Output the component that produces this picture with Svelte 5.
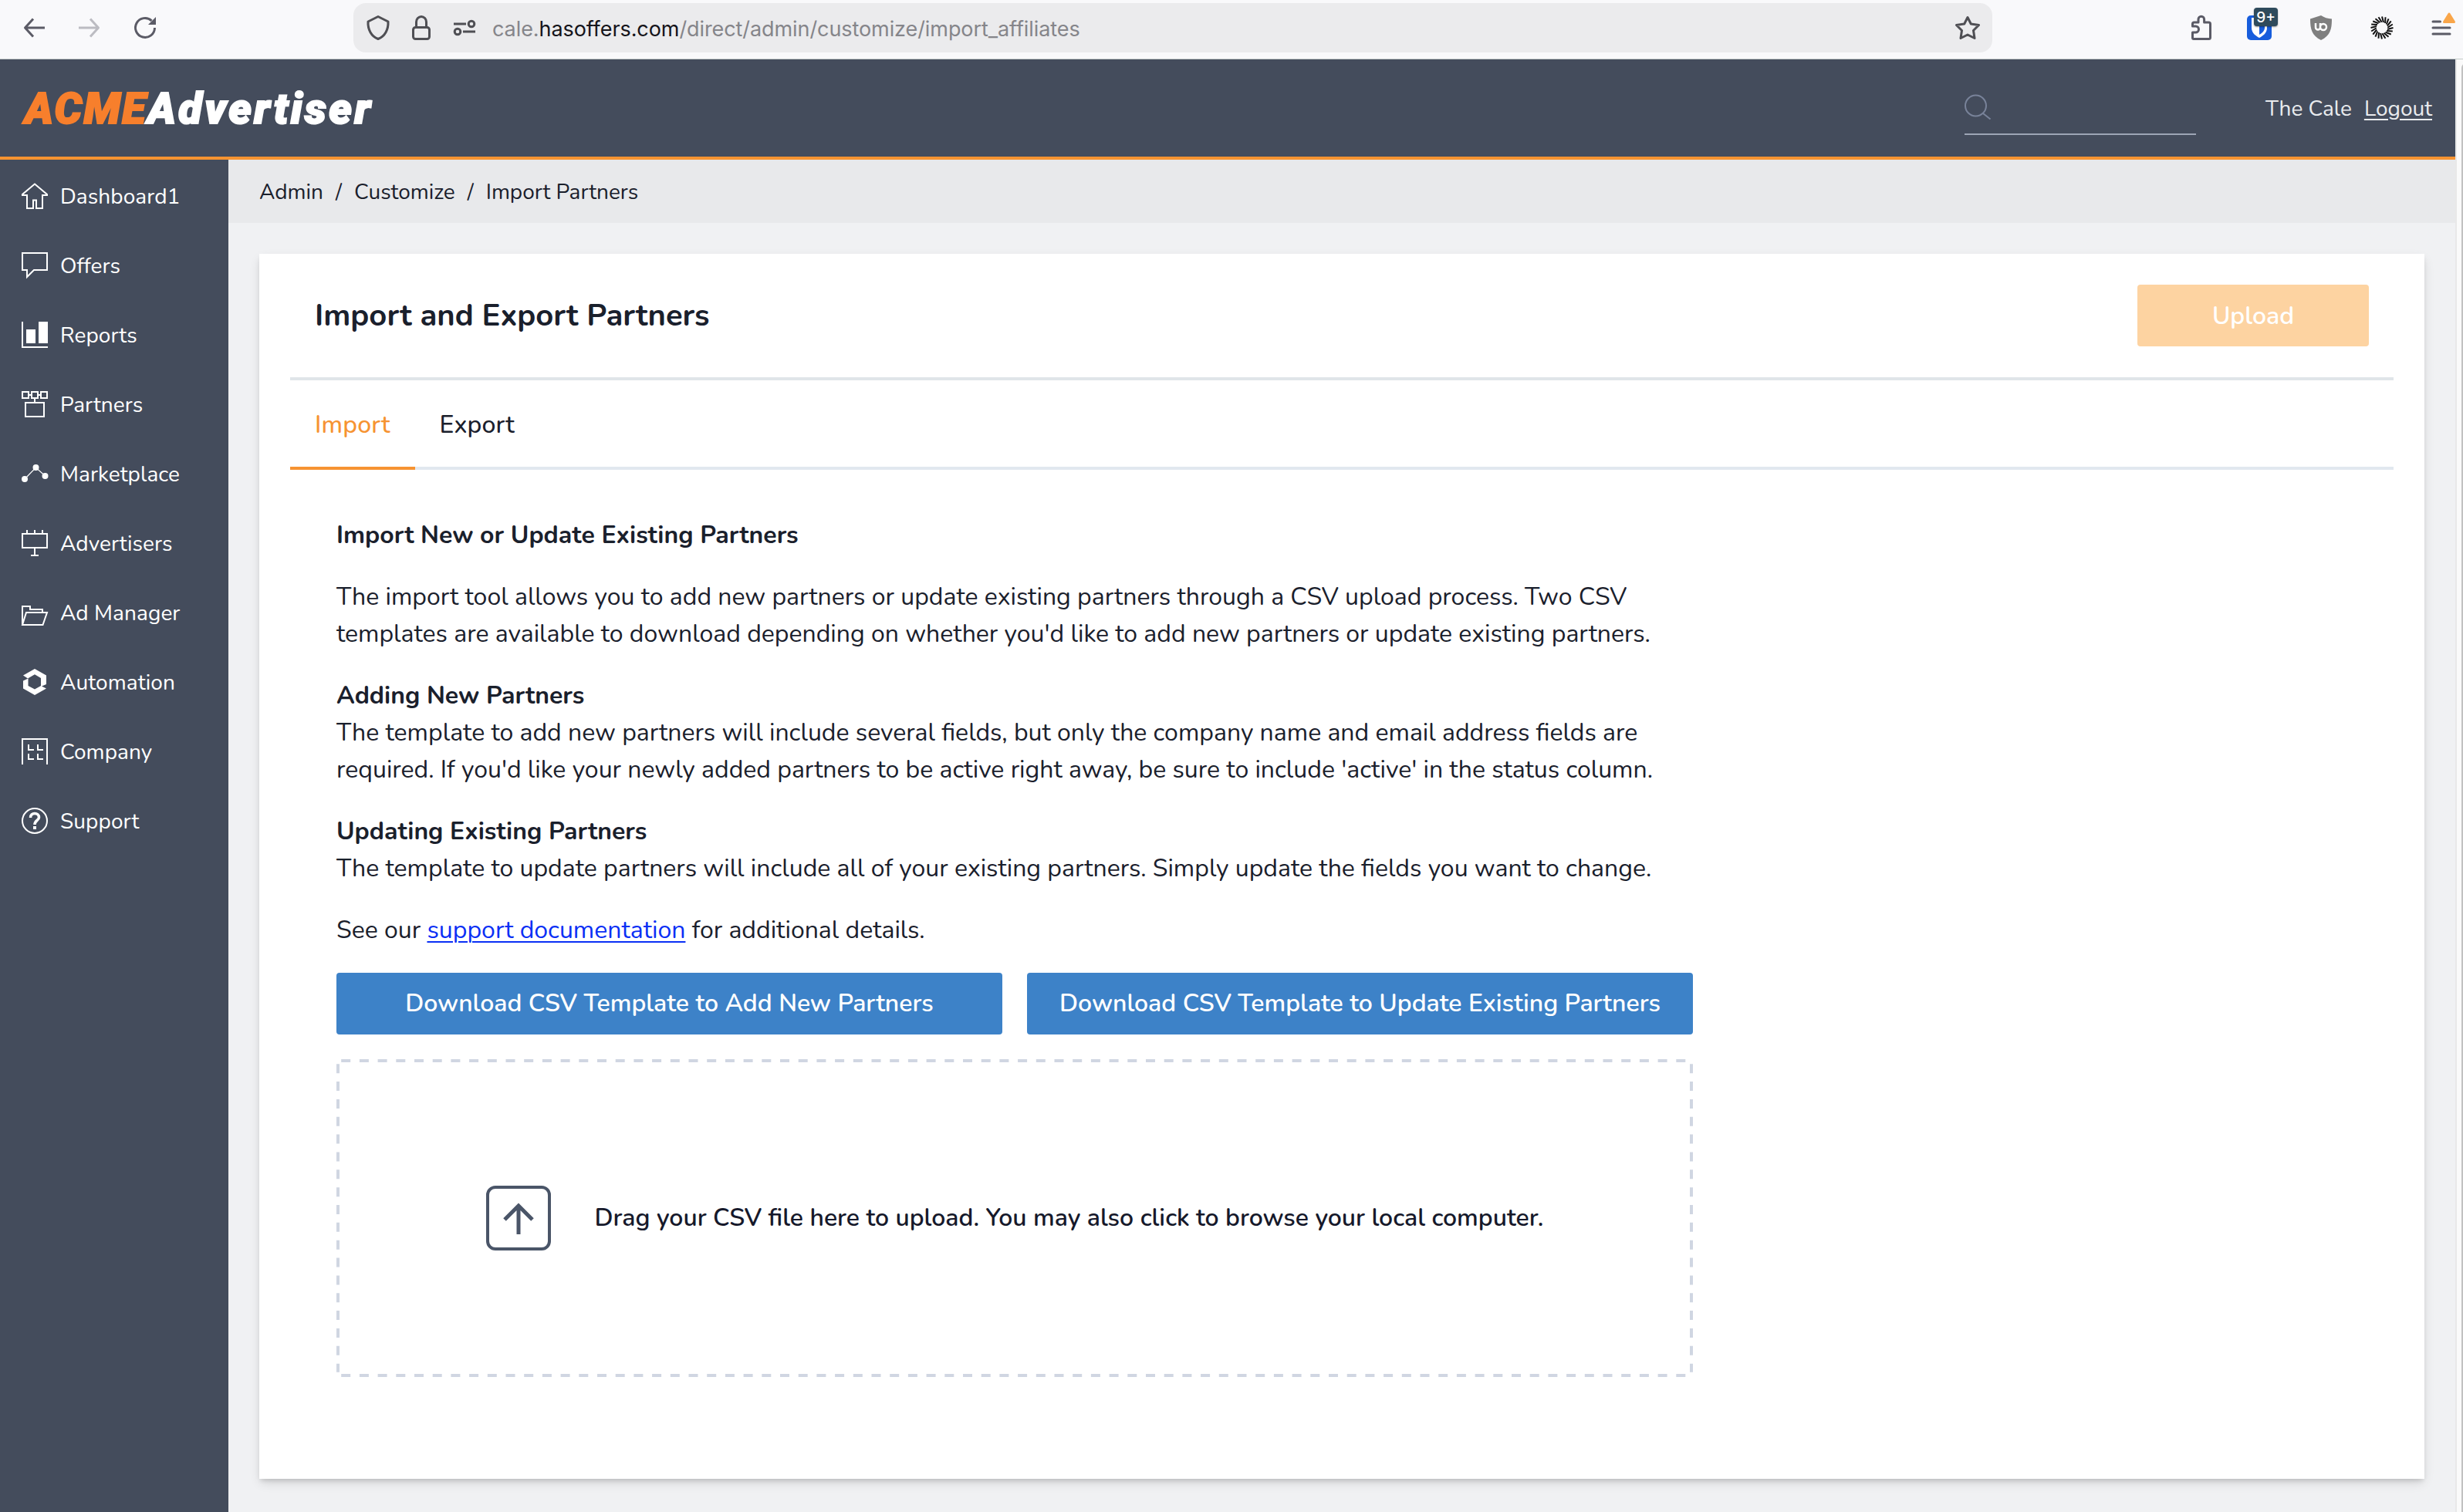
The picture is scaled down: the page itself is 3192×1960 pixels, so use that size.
<script>
  const navItems = [
    { id: 'dashboard', label: 'Dashboard1', line: 'M7 16V33H15V22.5H19V33H27V16H33V15L17 1.5 1 15V16Z' },
    { id: 'offers', label: 'Offers', line: 'M1 1H33V23H16L7 32V23H1Z' },
    { id: 'reports', label: 'Reports', line: 'M1 0V33H34', fill: 'M6 10H18V28H6ZM22 0H34V28H22Z' },
    { id: 'partners', label: 'Partners', line: 'M1 1H9V9H1ZM13 1H21V9H13ZM25 1H33V9H25ZM9 5H13M21 5H25M17 9V15M5 15H29V33H5Z' },
    {
      id: 'marketplace',
      label: 'Marketplace',
      thin: 'M4 24L18.500 9 30.500 20',
      fill: 'M0 24a4 4 0 1 0 8 0a4 4 0 1 0-8 0ZM14.500 9a4 4 0 1 0 8 0a4 4 0 1 0-8 0ZM26.500 20a4 4 0 1 0 8 0a4 4 0 1 0-8 0Z'
    },
    { id: 'advertisers', label: 'Advertisers', line: 'M1 5H33V23H1ZM7 0V4M17 0V4M27 0V4M17 24V32M12 33H22' },
    { id: 'ad-manager', label: 'Ad Manager', line: 'M1 33V9H11V13H27V17M6 17H33L27.500 33H1Z' },
    {
      id: 'automation',
      label: 'Automation',
      fill: 'M2 8.500L17 0 32 8.500V20L25 23V12L17 7.300 8 12.500ZM2 15.500L8.500 12.500V22L17 26.500 25 22 32 25.500 17 34 2 25.500Z'
    },
    { id: 'company', label: 'Company', line: 'M1 34V1H33V34M9 8V15H16M21 8V15H28M9 20V27H16M21 20V27H28' },
    {
      id: 'support',
      label: 'Support',
      line: 'M1 17a16 16 0 1 0 32 0a16 16 0 1 0-32 0Z',
      bold: 'M11.500 13C11.500 9.500 14 7.500 17 7.500S22.500 9.500 22.500 12.500C22.500 16.500 17 16.500 17 22',
      fill: 'M15 24H19V28H15Z'
    }
  ];

  const crumbs = ['Admin', 'Customize', 'Import Partners'];
  const tabs = ['Import', 'Export'];
  const rays = Array.from({ length: 20 }, (_, i) => i * 18);

  let activeTab = $state('Import');
</script>

<div class="window">
  <div class="toolbar">
    <div class="nav-buttons">
      <svg width="28" height="28" viewBox="0 0 28 28"><path d="M13 2.500L2.500 14 13 25.500M2.500 14H28" /></svg>
      <svg class="disabled" width="28" height="28" viewBox="0 0 28 28"><path d="M15 2.500L25.500 14 15 25.500M25.500 14H0" /></svg>
      <svg width="28" height="28" viewBox="0 0 28 28">
        <path d="M26.500 14A12.500 12.500 0 1 1 22.500 4.800" />
        <path class="solid" d="M28 0V10H18Z" />
      </svg>
    </div>

    <div class="urlbar">
      <svg width="30" height="32" viewBox="0 0 30 32"><path d="M15 1.500L28 8C28.500 18 24 27 15 30.500 6 27 1.500 18 2 8Z" /></svg>
      <svg class="lock" width="24" height="32" viewBox="0 0 24 32">
        <rect x="1.500" y="15.500" width="21" height="15" rx="3" />
        <path d="M5.500 15V8.500a6.500 7 0 0 1 13 0V15" />
      </svg>
      <svg class="permissions" width="28" height="20" viewBox="0 0 28 20">
        <path d="M0 5H16M12 15H28" />
        <circle cx="23" cy="5" r="3.800" />
        <circle cx="5" cy="15" r="3.800" />
      </svg>
      <span class="url">cale.<b>hasoffers.com</b>/direct/admin/customize/import_affiliates</span>
      <svg class="star" width="32" height="30" viewBox="0 0 32 30">
        <path d="M16 1.500L20.300 10 30.500 11.500 23.500 18.500 25 28.500 16 24 7 28.500 8.500 18.500 1.500 11.500 11.700 10Z" />
      </svg>
    </div>

    <div class="extensions">
      <svg width="26" height="32" viewBox="0 0 26 32">
        <path d="M1.500 29V22H5.500a4 4 0 0 0 0-8H1.500V11Q1.500 9 3.500 9H9V5a3.800 3.800 0 0 1 7.600 0V9H22.500Q24.500 9 24.500 11V28.500Q24.500 30.500 22.500 30.500H3Q1.500 30.500 1.500 29Z" />
      </svg>
      <div class="vault">
        <svg width="32" height="32" viewBox="0 0 32 32">
          <rect class="vault-bg" width="32" height="32" rx="5" />
          <path class="vault-shield" d="M6 3H26V16C26 23 20 27 16 29 12 27 6 23 6 16Z" />
          <path class="vault-bg" d="M16 6H23V16C23 20 19 23.500 16 25Z" />
        </svg>
        <span class="badge">9+</span>
      </div>
      <svg width="28" height="32" viewBox="0 0 28 32">
        <path class="blocker" d="M14 0Q20 4 28 4.500C28 18 26 26 14 32 2 26 0 18 0 4.500 8 4 14 0Z" />
        <path class="blocker-mark" d="M7 10V15.500a3 3 0 0 0 6 0V10M13 15a4 4 0 1 0 8 0a4 4 0 1 0-8 0" />
      </svg>
      <svg width="30" height="30" viewBox="0 0 30 30">
        {#each rays as angle}
          <path class="ray" d="M15 0.500L17 8" transform={`rotate(${angle} 15 15)`} />
        {/each}
      </svg>
      <svg class="menu" width="30" height="30" viewBox="0 0 30 30">
        <path d="M1 7H10.500M1 15H23M1 23H23" />
        <path class="alert" d="M22 -3L28.500 7.500H15.500Z" />
      </svg>
    </div>
  </div>

  <div class="page">
    <div class="app">
      <header>
        <div class="logo"><span>ACME</span>Advertiser</div>
        <div class="account">
          <div class="search">
            <svg width="36" height="34" viewBox="0 0 36 34"><circle cx="14.500" cy="16" r="13.500" /><path d="M24 26L33.500 33.500" /></svg>
          </div>
          <span class="user">The Cale</span>
          <a href="#logout" class="logout">Logout</a>
        </div>
      </header>

      <div class="body">
        <nav>
          {#each navItems as item}
            <a href={`#${item.id}`} class="nav-item">
              <svg width="34" height="34" viewBox="0 0 34 34">
                {#if item.line}<path d={item.line} />{/if}
                {#if item.thin}<path class="thin" d={item.thin} />{/if}
                {#if item.bold}<path class="bold" d={item.bold} />{/if}
                {#if item.fill}<path class="solid" d={item.fill} />{/if}
              </svg>
              <span>{item.label}</span>
            </a>
          {/each}
        </nav>

        <main>
          <div class="breadcrumb">
            {#each crumbs as crumb, i}
              {#if i > 0}<span class="slash">/</span>{/if}
              <span>{crumb}</span>
            {/each}
          </div>

          <section class="card">
            <div class="card-head">
              <h1>Import and Export Partners</h1>
              <button type="button" class="upload" disabled>Upload</button>
            </div>

            <div class="tabs">
              {#each tabs as tab}
                <button type="button" class="tab" class:active={activeTab === tab} onclick={() => (activeTab = tab)}>{tab}</button>
              {/each}
            </div>

            <div class="content">
              <p class="strong">Import New or Update Existing Partners</p>
              <p>
                The import tool allows you to add new partners or update existing partners through a CSV upload process. Two CSV<br />
                templates are available to download depending on whether you'd like to add new partners or update existing partners.
              </p>
              <p>
                <b>Adding New Partners</b><br />
                The template to add new partners will include several fields, but only the company name and email address fields are<br />
                required. If you'd like your newly added partners to be active right away, be sure to include 'active' in the status column.
              </p>
              <p>
                <b>Updating Existing Partners</b><br />
                The template to update partners will include all of your existing partners. Simply update the fields you want to change.
              </p>
              <p>See our <a href="#docs">support documentation</a> for additional details.</p>

              <div class="downloads">
                <button type="button">Download CSV Template to Add New Partners</button>
                <button type="button">Download CSV Template to Update Existing Partners</button>
              </div>

              <div class="dropzone">
                <svg class="outline" width="1758" height="412" viewBox="0 0 1758 412">
                  <path class="dash-h" d="M6.200 2H1751.800M6.200 410H1751.800" />
                  <path class="dash-v" d="M2 6.200V405.800M1756 6.200V405.800" />
                </svg>
                <svg width="84" height="84" viewBox="0 0 84 84">
                  <rect x="2" y="2" width="80" height="80" rx="10" />
                  <path d="M42 63V25M24 44L42 26 60 44" />
                </svg>
                <span>Drag your CSV file here to upload. You may also click to browse your local computer.</span>
              </div>
            </div>
          </section>
        </main>
      </div>
    </div>
    <div class="scrollbar"><div class="thumb"></div></div>
  </div>
</div>

<style>
  :global(body) { margin: 0; }

  .window {
    display: flex;
    flex-direction: column;
    width: 3192px;
    height: 1960px;
    overflow: hidden;
    font-family: Nunito, Lato, sans-serif;
    font-size: 32px;
    color: #1a202c;
  }

  svg { display: block; flex: none; fill: none; overflow: visible; }
  button { font: inherit; letter-spacing: inherit; border: 0; margin: 0; padding: 0; }

  /* browser toolbar */
  .toolbar {
    display: flex;
    align-items: flex-start;
    flex: none;
    box-sizing: border-box;
    height: 77px;
    padding: 4px 10px 0 30px;
    background: #f9f9fb;
    border-bottom: 1px solid #c4cbc8;
  }
  .toolbar svg { stroke: #5b5b66; stroke-width: 3; stroke-linejoin: round; }
  .nav-buttons { display: flex; align-items: center; gap: 44px; height: 64px; width: 428px; }
  .toolbar .disabled { stroke: #bcbcc2; }
  .toolbar .solid { fill: #5b5b66; stroke: none; }

  .urlbar {
    display: flex;
    align-items: center;
    box-sizing: border-box;
    width: 2124px;
    height: 64px;
    padding: 0 16px 0 17px;
    border-radius: 16px;
    background: #ebebed;
  }
  .toolbar .urlbar svg { stroke: #4f4f54; }
  .lock { margin-left: 29px; }
  .permissions { margin-left: 30px; }
  .url { margin-left: 22px; padding-top: 3px; font: 27px/40px Inter, sans-serif; letter-spacing: -.08px; color: #85858a; white-space: nowrap; }
  .url b { font-weight: 400; color: #15141a; }
  .star { margin-left: auto; }

  .extensions { display: flex; align-items: center; height: 64px; margin-left: 258px; gap: 50px; }
  .vault { position: relative; margin-left: -4px; }
  .toolbar .vault-bg { fill: #175ddc; stroke: none; }
  .toolbar .vault-shield { fill: #fff; stroke: none; }
  .badge {
    position: absolute;
    left: 9px;
    top: -10px;
    width: 31px;
    height: 24px;
    border-radius: 4px;
    background: #2f4b5c;
    box-shadow: 0 1px 2px rgba(0, 0, 0, .4);
    color: #fff;
    font: 500 19px/25px Inter, sans-serif;
    text-align: center;
  }
  .toolbar .blocker { fill: #7f7f7f; stroke: none; }
  .toolbar .blocker-mark { stroke: #fff; stroke-width: 2.500; }
  .toolbar .ray { stroke: #111; stroke-width: 2; }
  .menu { stroke-linecap: round; }
  .toolbar .alert { fill: #f9a64a; stroke: #f9a64a; }

  .page { display: flex; flex: 1; min-height: 0; }
  .app { display: flex; flex-direction: column; flex: 1; }
  .scrollbar { width: 8px; padding-top: 5px; border-left: 2px solid #e8e8e8; background: #fafafa; }
  .thumb { width: 12px; height: 1900px; margin-left: 6px; border-radius: 6px 0 0 6px; background: #c1c1c1; }

  header {
    display: flex;
    align-items: center;
    justify-content: space-between;
    box-sizing: border-box;
    height: 130px;
    padding: 0 30px 0 28px;
    border-bottom: 4px solid #f69331;
    background: #444c5c;
  }
  .logo {
    padding: 2px 0 0 4px;
    color: #fff;
    font: italic 900 56px/66px Roboto, sans-serif;
    letter-spacing: 3.400px;
    -webkit-text-stroke: 2px #fff;
  }
  .logo span { color: #f77f2c; letter-spacing: 2.200px; -webkit-text-stroke-color: #f77f2c; }
  .account { display: flex; font-size: 28px; line-height: 42px; color: #e9ebee; }
  .search { width: 300px; height: 52px; margin: 16px 90px 0 0; border-bottom: 2px solid #9da5b5; }
  .search svg { stroke: #79839a; stroke-width: 2; }
  .user, .logout { margin-top: 1px; align-self: center; }
  .logout { margin-left: 16px; color: inherit; text-underline-offset: 4px; }

  .body { display: flex; flex: 1; }
  nav { flex: none; width: 296px; padding-top: 2px; box-sizing: border-box; background: #444c5c; }
  .nav-item {
    display: flex;
    align-items: center;
    gap: 16px;
    height: 90px;
    padding-left: 28px;
    color: #fff;
    font-size: 28px;
    letter-spacing: .08px;
    text-decoration: none;
  }
  .nav-item span { padding-top: 2px; }
  .nav-item svg { stroke: #fff; stroke-width: 2; }
  .nav-item .solid { fill: #fff; stroke: none; }
  .nav-item .thin { stroke-width: 1.200; }
  .nav-item .bold { stroke-width: 3.600; }

  main { flex: 1; background: #f0f1f3; }
  .breadcrumb {
    display: flex;
    align-items: center;
    gap: 16px;
    box-sizing: border-box;
    height: 82px;
    padding: 2px 0 0 40px;
    background: #e8e9eb;
    font-size: 28px;
  }

  .card {
    box-sizing: border-box;
    height: 1588px;
    margin: 40px 40px 0;
    padding: 0 40px;
    background: #fff;
    box-shadow: 0 6px 14px -2px rgba(0, 0, 0, .14), 0 4px 6px -2px rgba(0, 0, 0, .14);
  }
  .card-head {
    display: flex;
    align-items: center;
    justify-content: space-between;
    height: 160px;
    padding: 0 32px;
    border-bottom: 4px solid #e0e5e9;
  }
  h1 { margin: 0; font-size: 40px; font-weight: 700; }
  .upload { width: 300px; height: 80px; border-radius: 4px; background: #fdd3a1; color: #fff; font-weight: 600; }

  .tabs { display: flex; height: 112px; border-bottom: 4px solid #e1e8ef; }
  .tab {
    height: 116px;
    padding: 2px 32px 0;
    border-bottom: 4px solid transparent;
    background: none;
    color: #1a202c;
    font-weight: 500;
    letter-spacing: .150px;
  }
  .tab.active { border-color: #f69331; color: #f69331; }

  .content { width: 1758px; padding: 61px 0 0 60px; line-height: 48px; }
  p { margin: 0 0 32px; white-space: nowrap; }
  .strong, p b { font-weight: 700; }
  p a { color: #0a2ff5; text-underline-offset: 4px; text-decoration-thickness: 2px; }

  .downloads { display: grid; grid-template-columns: 1fr 1fr; gap: 32px; margin: -1px 0 32px; }
  .downloads button { height: 80px; border-radius: 4px; background: #3d82c8; color: #fff; font-weight: 600; }

  .dropzone {
    position: relative;
    display: flex;
    align-items: center;
    justify-content: center;
    gap: 57px;
    height: 412px;
    color: #16192b;
    font-weight: 600;
  }
  .dropzone svg { stroke: #4a5568; stroke-width: 4; }
  .dropzone path { stroke-width: 5; }
  .dropzone .outline { position: absolute; inset: 0; stroke: #d0d6e2; }
  .dropzone .outline path { stroke-width: 4; }
  .dash-h { stroke-dasharray: 12 11.700; }
  .dash-v { stroke-dasharray: 12 10.850; }
</style>
